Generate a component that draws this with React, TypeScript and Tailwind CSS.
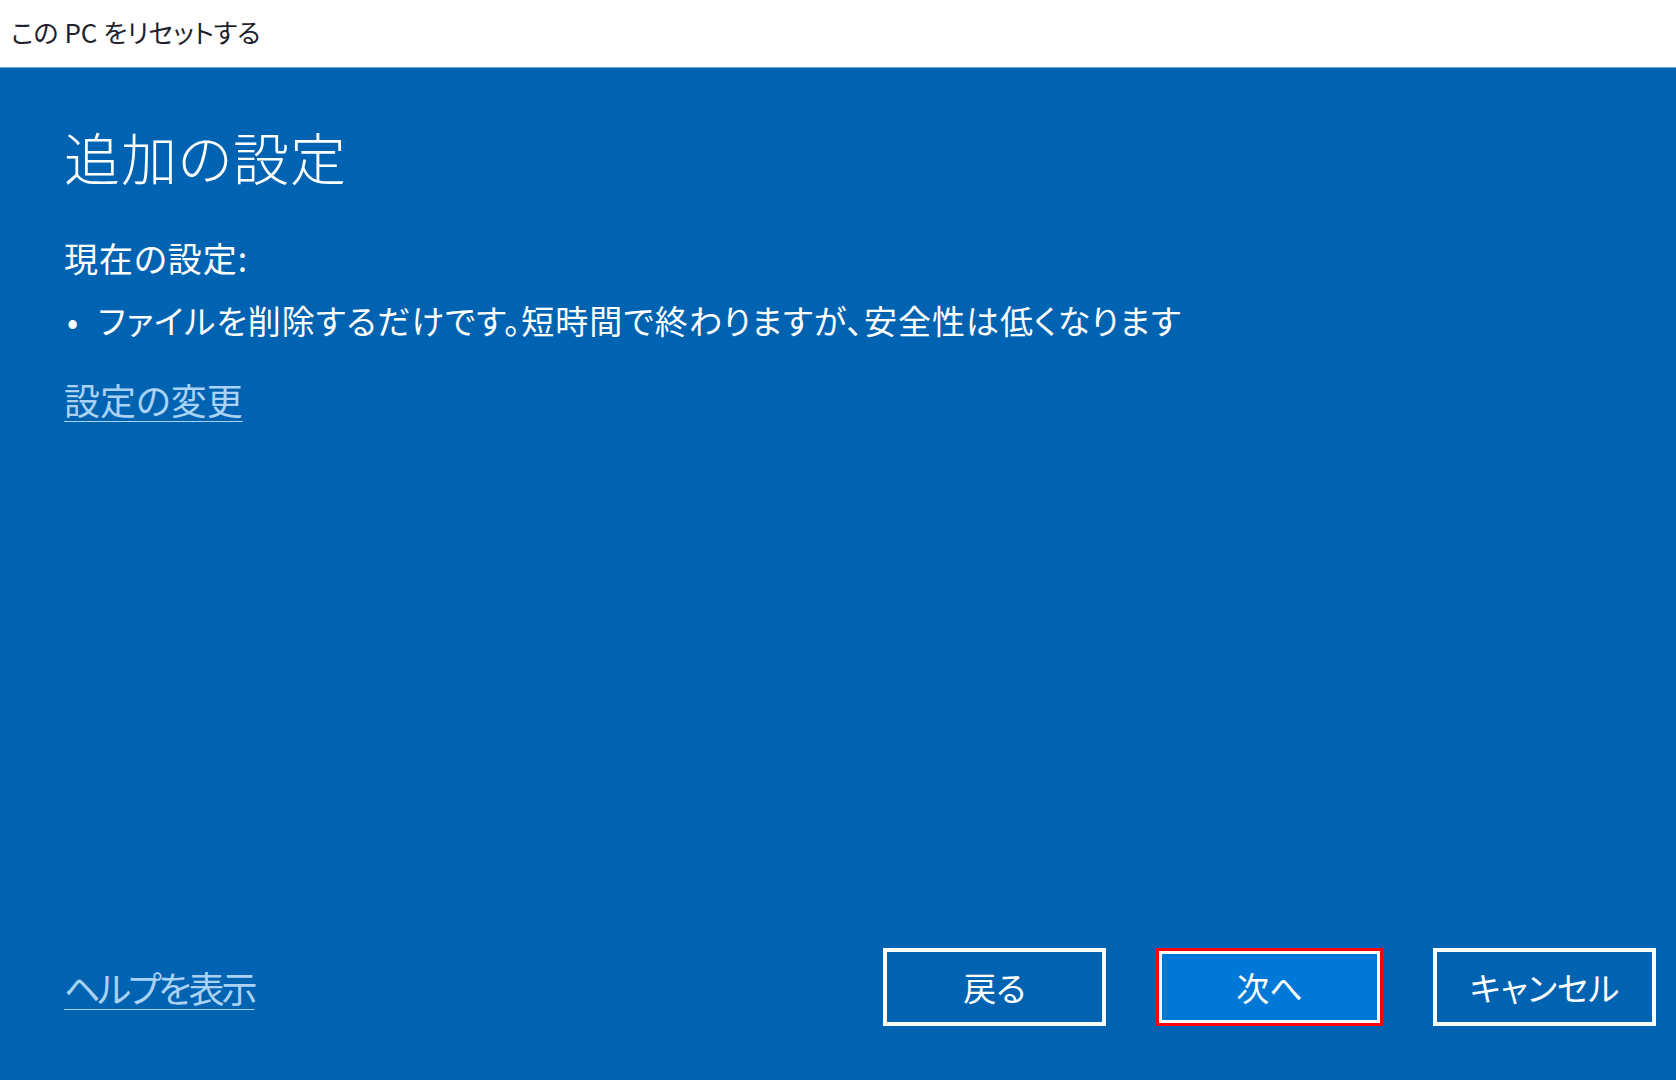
const jp = "font-['Noto_Sans_CJK_JP','Noto_Sans',sans-serif]";

function DialogButton({ label, primary }: { label: string; primary?: boolean }) {
  if (primary) {
    return (
      <div className="border-[3px] border-[#ff0000]">
        <button className="flex h-[72px] w-[221px] items-center justify-center border-[3px] border-white bg-[#0078d7] text-[33px] leading-none text-white">
          {label}
        </button>
      </div>
    );
  }
  return (
    <button className="flex h-[78px] w-[223px] items-center justify-center border-4 border-white bg-transparent text-[33px] leading-none text-white">
      {label}
    </button>
  );
}

export default function App() {
  return (
    <div className={`flex h-[1080px] w-[1676px] flex-col bg-[#0063b1] ${jp} [font-feature-settings:'palt']`}>
      <div className="flex h-[68px] items-center border-b border-[#6fa6d6] bg-white pl-[11px] pb-[4px]">
        <span className="text-[26px] leading-none text-[#1f1f2e]">この PC をリセットする</span>
      </div>

      <div className="flex-1 pl-[64px] pt-[60px] text-white">
        <h1 className="text-[56px] font-light leading-none tracking-[1px]">追加の設定</h1>
        <p className="mt-[57px] text-[34px] leading-none tracking-[1px]">現在の設定:</p>
        <div className="mt-[29px] flex text-[33px] leading-none">
          <span className="w-[34px] pl-[3px]">•</span>
          <span className="tracking-[1px]">ファイルを削除するだけです。短時間で終わりますが、安全性は低くなります</span>
        </div>
        <a className="mt-[44px] inline-block text-[36px] leading-none text-[#a9d2f5] underline decoration-1 underline-offset-[6px]">
          設定の変更
        </a>
      </div>

      <div className="flex items-center justify-between pb-[54px] pl-[64px] pr-[20px]">
        <a className="text-[36px] leading-none tracking-[-3px] text-[#a9d2f5] underline decoration-1 underline-offset-[6px]">ヘルプを表示</a>
        <div className="flex items-center gap-[50px]">
          <DialogButton label="戻る" />
          <DialogButton label="次へ" primary />
          <DialogButton label="キャンセル" />
        </div>
      </div>
    </div>
  );
}
